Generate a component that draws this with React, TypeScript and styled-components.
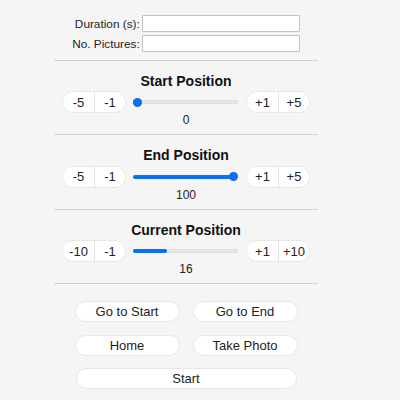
import React from "react";
import styled, { createGlobalStyle } from "styled-components";

const GlobalStyle = createGlobalStyle`
  html, body {
    margin: 0;
    padding: 0;
    background: #f5f5f5;
    font-family: "Liberation Sans", Arial, sans-serif;
    color: #1f1f1f;
  }
  * { box-sizing: border-box; }
`;

const Panel = styled.div`
  width: 264px;
  margin-left: 54px;
  padding-top: 15px;
`;

const Form = styled.div`
  display: grid;
  grid-template-columns: auto 158px;
  column-gap: 2px;
  row-gap: 3px;
  justify-content: center;
  align-items: center;
`;

const Label = styled.label`
  font-size: 11.8px;
  text-align: right;
  color: #1e1e1e;
`;

const TextInput = styled.input`
  height: 17px;
  width: 158px;
  border: 1px solid #c2c2c2;
  border-radius: 1px;
  background: #fff;
  padding: 0 3px;
  font: inherit;
  font-size: 11px;
  outline: none;
`;

const Divider = styled.hr<{ $top?: number }>`
  border: none;
  height: 1px;
  background: #d2d2d2;
  margin: ${(p) => p.$top ?? 0}px 0 0 0;
`;

const Section = styled.section`
  padding: 12px 0 7px;
  display: flex;
  flex-direction: column;
  align-items: center;
`;

const Heading = styled.h3`
  margin: 0;
  font-size: 14px;
  line-height: 17px;
  font-weight: bold;
  color: #111;
`;

const ControlRow = styled.div`
  display: flex;
  align-items: center;
  margin-top: 1.5px;
  height: 22px;
`;

const Group = styled.div`
  display: flex;
  height: 22px;
  background: #fff;
  border: 1px solid #e6e6e6;
  border-radius: 11px;
  overflow: hidden;
`;

const StepButton = styled.button`
  width: 31px;
  height: 100%;
  border: none;
  background: #fff;
  font-family: inherit;
  font-size: 13px;
  color: #222;
  padding: 0;
  & + & {
    border-left: 1px solid #e2e2e2;
  }
`;

const Track = styled.div`
  position: relative;
  width: 105px;
  height: 4px;
  margin: 0 8px 0 7px;
  border-radius: 2px;
  background: #e8e8e8;
  box-shadow: inset 0 0 0 1px #dedede;
`;

const Fill = styled.div`
  position: absolute;
  left: 0;
  top: 0;
  height: 100%;
  border-radius: 2px;
  background: #0b6ff2;
`;

const Thumb = styled.div`
  position: absolute;
  top: 50%;
  width: 9px;
  height: 9px;
  margin-top: -4.5px;
  border-radius: 50%;
  background: #0b6ff2;
`;

const Value = styled.div`
  font-size: 12px;
  line-height: 14px;
  color: #222;
`;

const Actions = styled.div`
  display: grid;
  grid-template-columns: 105px 105px;
  column-gap: 13px;
  row-gap: 12.5px;
  justify-content: center;
  padding-top: 17px;
`;

const ActionButton = styled.button<{ $wide?: boolean }>`
  height: 21px;
  background: #fff;
  border: 1px solid #e6e6e6;
  border-radius: 11px;
  font-family: inherit;
  font-size: 13px;
  color: #222;
  padding: 0;
  ${(p) => (p.$wide ? "grid-column: 1 / span 2; margin: 0 1px;" : "")}
`;

type SliderProps = { value: number; max: number; thumb?: boolean };

const Slider: React.FC<SliderProps> = ({ value, max, thumb = true }) => {
  const pct = value / max;
  return (
    <Track>
      <Fill style={{ width: thumb ? `${4.5 + pct * 96}px` : `${pct * 100}%` }} />
      {thumb && <Thumb style={{ left: `${pct * 96}px` }} />}
    </Track>
  );
};

type PosProps = {
  title: string;
  small: number;
  value: number;
  max: number;
  thumb?: boolean;
};

const PositionSection: React.FC<PosProps> = ({ title, small, value, max, thumb }) => (
  <Section>
    <Heading>{title}</Heading>
    <ControlRow>
      <Group>
        <StepButton>-{small}</StepButton>
        <StepButton>-1</StepButton>
      </Group>
      <Slider value={value} max={max} thumb={thumb} />
      <Group>
        <StepButton>+1</StepButton>
        <StepButton>+{small}</StepButton>
      </Group>
    </ControlRow>
    <Value>{value}</Value>
  </Section>
);

export default function App() {
  return (
    <>
      <GlobalStyle />
      <Panel>
        <Form>
          <Label>Duration (s):</Label>
          <TextInput type="text" />
          <Label>No. Pictures:</Label>
          <TextInput type="text" />
        </Form>
        <Divider $top={7.5} />
        <PositionSection title="Start Position" small={5} value={0} max={100} />
        <Divider />
        <PositionSection title="End Position" small={5} value={100} max={100} />
        <Divider />
        <PositionSection title="Current Position" small={10} value={16} max={50} thumb={false} />
        <Divider />
        <Actions>
          <ActionButton>Go to Start</ActionButton>
          <ActionButton>Go to End</ActionButton>
          <ActionButton>Home</ActionButton>
          <ActionButton>Take Photo</ActionButton>
          <ActionButton $wide>Start</ActionButton>
        </Actions>
      </Panel>
    </>
  );
}
